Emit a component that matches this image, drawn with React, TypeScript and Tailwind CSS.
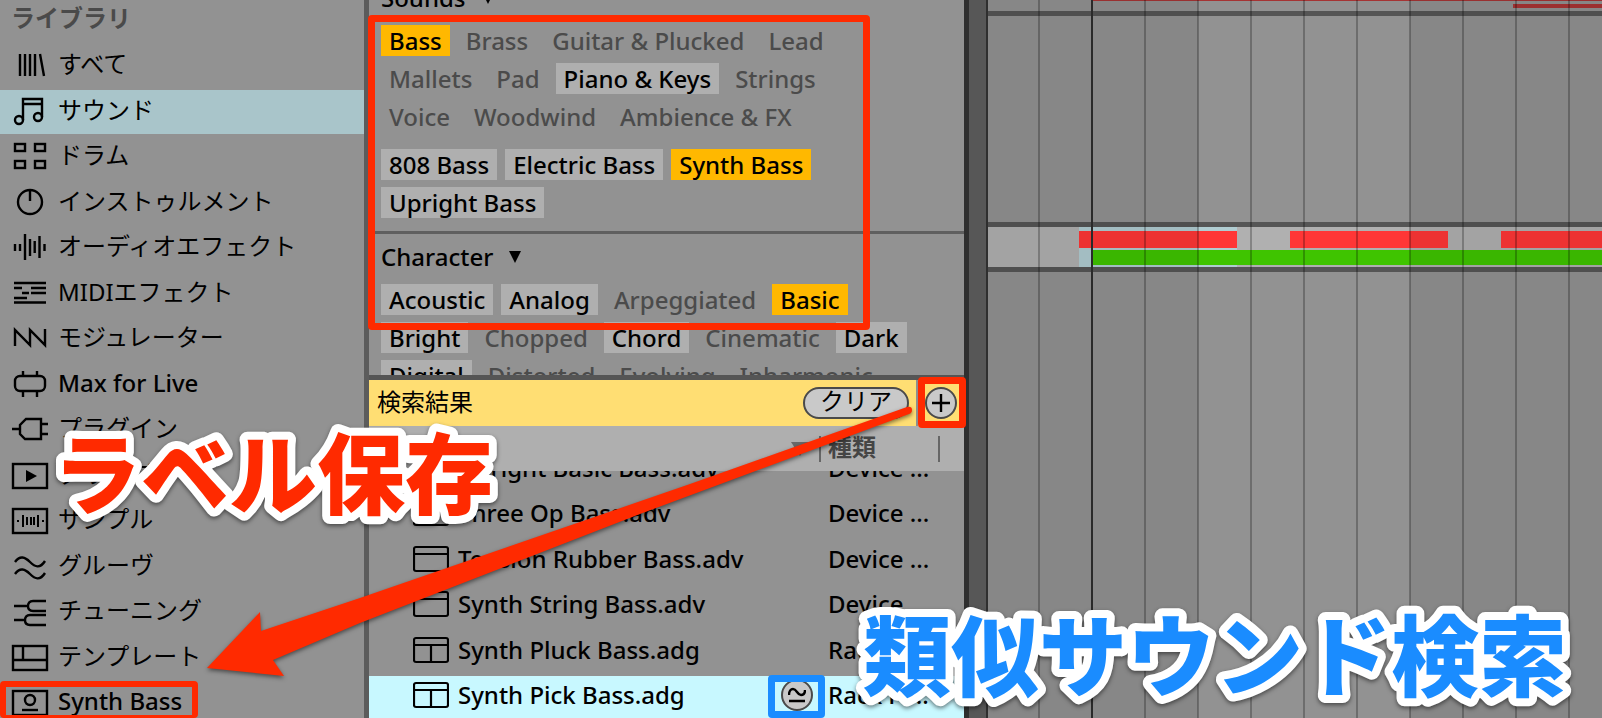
import React, { useState } from "react";
import clsx from "clsx";

const icons = {
    all: <path d="M8 3v22M13 3v22M18 3v22M23 3v22M28 3l4 22" />,
    sounds: (
        <>
            <path d="M11 23V2h19v18M11 7h19" />
            <circle cx="7" cy="23" r="4" />
            <circle cx="26" cy="20" r="4" />
        </>
    ),
    drums: (
        <>
            <rect x="3" y="2" width="10" height="7" />
            <rect x="23" y="2" width="10" height="7" />
            <rect x="3" y="19" width="10" height="7" />
            <rect x="23" y="19" width="10" height="7" />
        </>
    ),
    instruments: (
        <>
            <circle cx="18" cy="14" r="12" />
            <path d="M18 2v11" />
        </>
    ),
    audio: <path d="M3 11v7M8 11v7M13 1v26M18 6v17M22.7 8v12M27.5 3v22M32.5 11v7" />,
    midi: <path d="M2 4h32M2 9h8M19 9h15M10 14h7M19 14h15M2 19h13M2 23.5h32" />,
    modulators: <path d="M3 22V6l15 15V6l15 15V5" />,
    max: (
        <>
            <rect x="3" y="6" width="30" height="15" rx="5" />
            <path d="M11 1v5M25 1v5M11 21v6M25 21v6" />
        </>
    ),
    plugins: <path d="M0 14h8M29 4H14l-6 6v9l5 5h16zM29 9h7M29 19h7" />,
    clips: (
        <>
            <rect x="1" y="3" width="34" height="24" />
            <path d="M14 9l11 6-11 6z" fill="currentColor" stroke="none" />
        </>
    ),
    samples: (
        <>
            <rect x="1" y="3" width="34" height="24" />
            <path d="M5 15h2M11 9v12M15 11v8M19 11v8M22 11v8M26 9v12M30 15h2" strokeWidth="2" />
        </>
    ),
    grooves: <path d="M3 10c5-7 10-5 15 0s10 7 15-1M3 22c5-7 10-5 15 0s10 7 15-1" />,
    tunings: <path d="M2 9h14M34 4H21q-5 0-5 5t5 5h13M2 23h10M34 18H18q-5 0-5 5t5 5h16" />,
    templates: (
        <>
            <rect x="1" y="3" width="34" height="24" />
            <path d="M1 17h34M11 3v14" />
        </>
    ),
    label: (
        <>
            <rect x="1" y="3" width="34" height="24" />
            <circle cx="18" cy="12" r="5" />
            <path d="M10 22h16" />
        </>
    ),
};

const library = [
    { name: "すべて", icon: "all" },
    { name: "サウンド", icon: "sounds" },
    { name: "ドラム", icon: "drums" },
    { name: "インストゥルメント", icon: "instruments" },
    { name: "オーディオエフェクト", icon: "audio" },
    { name: "MIDIエフェクト", icon: "midi" },
    { name: "モジュレーター", icon: "modulators" },
    { name: "Max for Live", icon: "max", latin: true },
    { name: "プラグイン", icon: "plugins" },
    { name: "クリップ", icon: "clips" },
    { name: "サンプル", icon: "samples" },
    { name: "グルーヴ", icon: "grooves" },
    { name: "チューニング", icon: "tunings" },
    { name: "テンプレート", icon: "templates" },
    { name: "Synth Bass", icon: "label", latin: true },
];

// state: "on" is picked, "open" can be picked, "off" has no results
const soundTags = [
    [["Bass", "on"], ["Brass", "off"], ["Guitar & Plucked", "off"], ["Lead", "off"]],
    [["Mallets", "off"], ["Pad", "off"], ["Piano & Keys", "open"], ["Strings", "off"]],
    [["Voice", "off"], ["Woodwind", "off"], ["Ambience & FX", "off"]],
];
const bassTags = [
    [["808 Bass", "open"], ["Electric Bass", "open"], ["Synth Bass", "on"]],
    [["Upright Bass", "open"]],
];
const characterTags = [
    [["Acoustic", "open"], ["Analog", "open"], ["Arpeggiated", "off"], ["Basic", "on"]],
    [["Bright", "open"], ["Chopped", "off"], ["Chord", "open"], ["Cinematic", "off"], ["Dark", "open"]],
    [["Digital", "open"], ["Distorted", "off"], ["Evolving", "off"], ["Inharmonic", "off"]],
];

const results = [
    { name: "Upright Basic Bass.adv", type: "Device ..." },
    { name: "Three Op Bass.adv", type: "Device ..." },
    { name: "Tension Rubber Bass.adv", type: "Device ..." },
    { name: "Synth String Bass.adv", type: "Device ..." },
    { name: "Synth Pluck Bass.adg", type: "Rack Pr..." },
    { name: "Synth Pick Bass.adg", type: "Rack Pr..." },
];

function Sidebar() {
    const [selected, setSelected] = useState("サウンド");
    return (
        <nav className="w-[364px] shrink-0 overflow-hidden bg-[#929292]">
            <h2 className="h-9 mb-[7px] pl-[11px] leading-9 font-bold text-[#4a4a4a]">ライブラリ</h2>
            <ul>
                {library.map((item) => (
                    <li key={item.name} className="h-[45px] even:h-[46px] pt-[2px]">
                        <button
                            onClick={() => setSelected(item.name)}
                            className={clsx(
                                "flex items-center w-full h-full pl-3 pb-[3px] gap-[10px] text-left whitespace-nowrap",
                                selected === item.name && "bg-[#a9c5ca]"
                            )}
                        >
                            <svg width="36" height="28" viewBox="0 0 36 28" fill="none" stroke="currentColor" strokeWidth="2.4" className="shrink-0 overflow-visible">
                                {icons[item.icon]}
                            </svg>
                            <span className={clsx("pb-[2px]", item.latin ? "font-medium" : "font-normal")}>{item.name}</span>
                        </button>
                    </li>
                ))}
            </ul>
        </nav>
    );
}

function TagRows({ rows }) {
    return (
        <div className="flex flex-col gap-[7px]">
            {rows.map((row, i) => (
                <div key={i} className="flex gap-2">
                    {row.map(([name, state]) => (
                        <button
                            key={name}
                            className={clsx(
                                "h-[31px] px-2 leading-[31px] whitespace-nowrap",
                                state === "on" && "bg-[#ffb800]",
                                state === "open" && "bg-[#afafaf]",
                                state === "off" && "text-[#4b4b4b]"
                            )}
                        >
                            {name}
                        </button>
                    ))}
                </div>
            ))}
        </div>
    );
}

function GroupTitle({ children }) {
    return (
        <h3 className="flex items-center gap-4 h-[31px] mb-3">
            {children}
            <svg width="12" height="12" viewBox="0 0 12 12">
                <path d="M0 0h12L6 12z" />
            </svg>
        </h3>
    );
}

function Filters() {
    return (
        <section className="h-[375px] overflow-hidden">
            <div className="-mt-[18px] px-3 pb-[13px] border-b-[3px] border-[#5f5f5f]">
                <GroupTitle>Sounds</GroupTitle>
                <TagRows rows={soundTags} />
                <div className="mt-[17px]">
                    <TagRows rows={bassTags} />
                </div>
            </div>
            <div className="px-3 pt-[7px]">
                <GroupTitle>Character</GroupTitle>
                <TagRows rows={characterTags} />
            </div>
        </section>
    );
}

function ResultBar() {
    return (
        <div className="flex h-[51px] border-t-[5px] border-[#555] gap-[2px] bg-[#8e8e8e] font-normal">
            <div className="flex flex-1 items-center justify-between pl-2 pr-[7px] bg-[#ffde73]">
                <span className="pb-[2px]">検索結果</span>
                <button className="h-8 w-[106px] rounded-full border-2 border-[#4a4a4a] bg-[#c9c9c9] leading-6 pb-1">クリア</button>
            </div>
            <div className="flex w-[46px] items-center justify-center bg-[#ffde73]">
                <button aria-label="ラベルを追加" className="flex size-8 items-center justify-center rounded-full border-2 border-[#4a4a4a] bg-[#c9c9c9]">
                    <svg width="18" height="18" viewBox="0 0 18 18" stroke="#000" strokeWidth="2.4">
                        <path d="M9 0v18M0 9h18" />
                    </svg>
                </button>
            </div>
        </div>
    );
}

function FileIcon({ rack }) {
    return (
        <svg width="36" height="28" viewBox="0 0 36 28" fill="none" stroke="#000" strokeWidth="2.2" className="shrink-0">
            <rect x="1" y="2" width="34" height="24" rx="2" />
            <path d="M1 9h34" />
            {rack && <path d="M18 9v17" />}
        </svg>
    );
}

function Results() {
    return (
        <table className="w-full table-fixed border-collapse">
            <thead>
                <tr className="h-[45px] bg-[#afafaf] text-[#454545] text-left">
                    <th className="p-0 pl-2 font-bold">
                        <div className="flex items-center justify-between pr-[10px]">
                            名前
                            <svg width="18" height="14" viewBox="0 0 18 14" fill="#6a6a6a">
                                <path d="M0 0h18L9 14z" />
                            </svg>
                        </div>
                    </th>
                    <th className="w-[145px] p-0 font-bold">
                        <div className="flex h-[26px] w-[121px] items-center border-x-2 border-[#666] pl-[7px] pb-1">種類</div>
                    </th>
                </tr>
            </thead>
            <tbody>
                {results.map((file, i) => {
                    const last = i === results.length - 1;
                    // the first row is scrolled half under the header
                    const height = i === 0 ? "h-5 items-end" : i % 2 ? "h-[46px] items-center" : "h-[45px] items-center";
                    return (
                        <tr key={file.name}>
                            <td className="p-0">
                                <div className={clsx("flex overflow-hidden pt-[2px]", height)}>
                                    <div className={clsx("flex h-[43px] shrink-0 grow items-center gap-[9px] pl-11 pr-[6px] pb-1 whitespace-nowrap", last && "bg-[#c8f8ff]")}>
                                        <FileIcon rack={file.name.endsWith("adg")} />
                                        {file.name}
                                        {last && (
                                            <button aria-label="類似サウンド検索" className="ml-auto flex size-8 items-center justify-center rounded-full border-2 border-[#4a4a4a] bg-[#c9c9c9]">
                                                <svg width="18" height="18" viewBox="0 0 18 18" fill="none" stroke="#000" strokeWidth="2.4">
                                                    <path d="M1 9c0-4 2-6 4-6 4 0 4 6 8 6 3 0 4-2 4-5M1 15h16" />
                                                </svg>
                                            </button>
                                        )}
                                    </div>
                                </div>
                            </td>
                            <td className="p-0">
                                <div className={clsx("flex overflow-hidden pt-[2px]", height)}>
                                    <div className={clsx("flex h-[43px] shrink-0 grow items-center pl-[9px] pb-1 whitespace-nowrap", last && "bg-[#c8f8ff]")}>{file.type}</div>
                                </div>
                            </td>
                        </tr>
                    );
                })}
            </tbody>
        </table>
    );
}

function Arrangement() {
    return (
        <main className="relative flex-1 min-w-0 overflow-hidden bg-[#929292]">
            <div className="h-4 border-b-[5px] border-[#555]">
                <div className="h-px ml-[104px] bg-[#a53434]" />
                <div className="h-1 mt-[3px] ml-[525px] bg-[#a83434]" />
            </div>
            <div className="h-[211px] border-b-[5px] border-[#555]" />
            <div className="relative h-[45px] border-b-[5px] border-[#555] bg-[#b0b0b0]">
                <div className="absolute inset-y-0 left-[91px] w-[158px] bg-[#b0ccd1]" />
                <div className="relative flex gap-[53px] ml-[91px] pt-1">
                    <div className="h-[17px] w-[158px] shrink-0 bg-[#ff3636]" />
                    <div className="h-[17px] w-[158px] shrink-0 bg-[#ff3636]" />
                    <div className="h-[17px] w-[158px] shrink-0 bg-[#ff3636]" />
                </div>
                <div className="relative h-[15px] mt-[2px] ml-[105px] bg-[#3fc400]" />
            </div>
            <div className="absolute inset-0 flex">
                <div className="w-[210px] shrink-0 bg-black/7" />
                <div className="w-[212px] shrink-0" />
                <div className="flex-1 bg-black/7" />
            </div>
            <div className="absolute inset-0 -ml-px flex">
                {Array.from({ length: 40 }, (_, i) => (
                    <div key={i} className={clsx("w-[53px] shrink-0 border-r-2", i === 1 ? "border-[#2a2a2a]" : "border-black/25")} />
                ))}
            </div>
        </main>
    );
}

function Notes() {
    return (
        <svg className="pointer-events-none absolute left-0 top-0 drop-shadow-[0_2px_2px_rgba(0,0,0,0.5)]" width="1602" height="718" viewBox="0 0 1602 718">
            <g
                fontSize="88"
                fontWeight="900"
                stroke="#fff"
                strokeWidth="16"
                strokeLinejoin="round"
                paintOrder="stroke"
                className="font-['Noto_Sans_CJK_JP',sans-serif]"
            >
                <text x="53" y="507" fill="#ff2a00">ラベル保存</text>
                <text x="863" y="689" fill="#1a8cff">類似サウンド検索</text>
            </g>
            <path
                d="M207 668L260 612L261 631L360 598L690 484L907 407Q912 406 912 410Q912 413 909 414L640 514L360 623L273 660L284 676Z"
                fill="#ff2a00"
            />
        </svg>
    );
}

export default function App() {
    return (
        <div className="relative flex h-screen overflow-hidden bg-[#929292] text-[24px] leading-8 font-medium text-black font-['Noto_Sans','Noto_Sans_CJK_JP',sans-serif]">
            <Sidebar />
            <div className="w-[5px] shrink-0 bg-[#5c5c5c]" />
            <div className="w-[595px] shrink-0 overflow-hidden">
                <Filters />
                <ResultBar />
                <Results />
            </div>
            <div className="w-6 shrink-0 border-l-[5px] border-r-2 border-[#2f2f2f] bg-[#575757]" />
            <Arrangement />
            <div className="absolute left-[368px] top-[15px] h-[315px] w-[502px] rounded-sm border-[7px] border-[#ff2a00]" />
            <div className="absolute left-[918px] top-[377px] h-[51px] w-12 rounded-sm border-[7px] border-[#ff2a00]" />
            <div className="absolute left-0 top-[681px] h-[37px] w-[198px] rounded-sm border-[6px] border-b-[3px] border-[#ff2a00]" />
            <div className="absolute left-[768px] top-[675px] h-[43px] w-[57px] rounded-sm border-[7px] border-[#1a8cff]" />
            <Notes />
        </div>
    );
}
